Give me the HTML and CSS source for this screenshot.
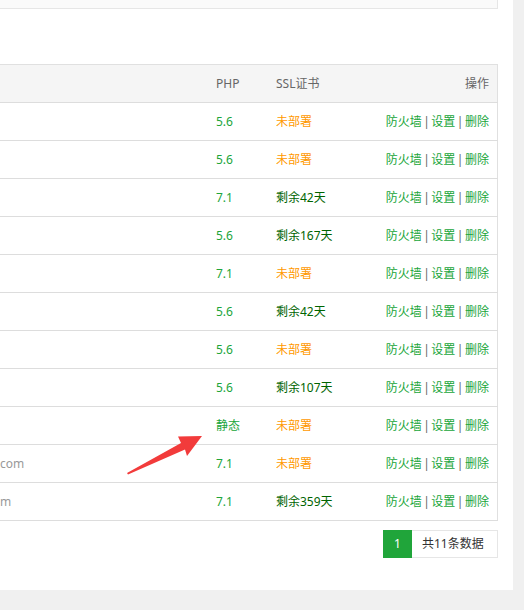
FILE: index.html
```html
<!DOCTYPE html>
<html lang="zh-CN">
<head>
    <meta charset="UTF-8">
    <meta name="viewport" content="width=device-width, initial-scale=1.0">
    <title>网站管理</title>
    <link rel="stylesheet" href="styles.css">
</head>
<body>
    <div class="panel">
        <div class="toolbar"></div>

        <table class="site-table">
            <colgroup>
                <col class="col-name">
                <col class="col-php">
                <col class="col-ssl">
                <col class="col-ops">
            </colgroup>
            <thead>
                <tr>
                    <th></th>
                    <th>PHP</th>
                    <th>SSL证书</th>
                    <th class="ops">操作</th>
                </tr>
            </thead>
            <tbody>
                <tr>
                    <td></td>
                    <td class="php">5.6</td>
                    <td class="ssl-none">未部署</td>
                    <td class="ops"><a>防火墙</a><span class="sep">|</span><a>设置</a><span class="sep">|</span><a>删除</a></td>
                </tr>
                <tr>
                    <td></td>
                    <td class="php">5.6</td>
                    <td class="ssl-none">未部署</td>
                    <td class="ops"><a>防火墙</a><span class="sep">|</span><a>设置</a><span class="sep">|</span><a>删除</a></td>
                </tr>
                <tr>
                    <td></td>
                    <td class="php">7.1</td>
                    <td class="ssl-ok">剩余42天</td>
                    <td class="ops"><a>防火墙</a><span class="sep">|</span><a>设置</a><span class="sep">|</span><a>删除</a></td>
                </tr>
                <tr>
                    <td></td>
                    <td class="php">5.6</td>
                    <td class="ssl-ok">剩余167天</td>
                    <td class="ops"><a>防火墙</a><span class="sep">|</span><a>设置</a><span class="sep">|</span><a>删除</a></td>
                </tr>
                <tr>
                    <td></td>
                    <td class="php">7.1</td>
                    <td class="ssl-none">未部署</td>
                    <td class="ops"><a>防火墙</a><span class="sep">|</span><a>设置</a><span class="sep">|</span><a>删除</a></td>
                </tr>
                <tr>
                    <td></td>
                    <td class="php">5.6</td>
                    <td class="ssl-ok">剩余42天</td>
                    <td class="ops"><a>防火墙</a><span class="sep">|</span><a>设置</a><span class="sep">|</span><a>删除</a></td>
                </tr>
                <tr>
                    <td></td>
                    <td class="php">5.6</td>
                    <td class="ssl-none">未部署</td>
                    <td class="ops"><a>防火墙</a><span class="sep">|</span><a>设置</a><span class="sep">|</span><a>删除</a></td>
                </tr>
                <tr>
                    <td></td>
                    <td class="php">5.6</td>
                    <td class="ssl-ok">剩余107天</td>
                    <td class="ops"><a>防火墙</a><span class="sep">|</span><a>设置</a><span class="sep">|</span><a>删除</a></td>
                </tr>
                <tr>
                    <td></td>
                    <td class="php">静态</td>
                    <td class="ssl-none">未部署</td>
                    <td class="ops"><a>防火墙</a><span class="sep">|</span><a>设置</a><span class="sep">|</span><a>删除</a></td>
                </tr>
                <tr>
                    <td class="name">com</td>
                    <td class="php">7.1</td>
                    <td class="ssl-none">未部署</td>
                    <td class="ops"><a>防火墙</a><span class="sep">|</span><a>设置</a><span class="sep">|</span><a>删除</a></td>
                </tr>
                <tr>
                    <td class="name">m</td>
                    <td class="php">7.1</td>
                    <td class="ssl-ok">剩余359天</td>
                    <td class="ops"><a>防火墙</a><span class="sep">|</span><a>设置</a><span class="sep">|</span><a>删除</a></td>
                </tr>
            </tbody>
        </table>

        <div class="pager">
            <span class="page current">1</span>
            <span class="page total">共11条数据</span>
        </div>

        <!-- annotation arrow pointing at 静态 -->
        <svg class="arrow" width="90" height="50" viewBox="120 430 90 50">
            <polygon points="127,473 181,443 178,436.5 202,436 187,456 185,449.5 128,474.5" fill="#f23b3b"/>
        </svg>
    </div>
</body>
</html>
```

FILE: styles.css
```css
body {
    margin: 0;
    background: #f0f0f0;
    font-family: "Noto Sans", "Noto Sans CJK SC", sans-serif;
    font-size: 12px;
    color: #666;
}
.panel {
    position: relative;
    width: 513px;
    height: 590px;
    background: #fff;
}
.toolbar {
    width: 498px;
    height: 9px;
    background: #fafafa;
    border-right: 1px solid #e6e6e6;
    border-bottom: 1px solid #e6e6e6;
    box-sizing: border-box;
    margin-bottom: 55px;
}
.site-table {
    width: 498px;
    border-collapse: collapse;
    table-layout: fixed;
    border-top: 1px solid #e0e0e0;
    border-right: 1px solid #e0e0e0;
}
.col-name { width: 208px; }
.col-php { width: 60px; }
.col-ssl { width: 100px; }
.site-table th,
.site-table td {
    height: 38px;
    padding: 0 8px;
    text-align: left;
    border-bottom: 1px solid #ddd;
    white-space: nowrap;
    line-height: 16px;
    box-sizing: border-box;
}
.site-table th {
    background: #f5f5f5;
    font-weight: normal;
    color: #666;
}
.site-table td.name {
    padding-left: 0;
    color: #999;
}
.site-table .ops {
    text-align: right;
}
.php {
    color: #20a53a;
}
.ssl-none {
    color: #ff9900;
}
.ssl-ok {
    color: #006400;
}
.ops a {
    color: #20a53a;
}
.ops .sep {
    padding: 0 1.5px;
    color: #666;
}
.pager {
    display: flex;
    justify-content: flex-end;
    width: 498px;
    margin-top: 9px;
}
.page {
    display: inline-block;
    height: 28px;
    line-height: 28px;
    box-sizing: border-box;
}
.page.current {
    width: 29px;
    text-align: center;
    background: #20a53a;
    color: #fff;
}
.page.total {
    padding: 0 10px;
    border: 1px solid #e6e6e6;
    border-left: none;
    color: #333;
    line-height: 26px;
    width: 86px;
}
.arrow {
    position: absolute;
    left: 120px;
    top: 430px;
}
```
